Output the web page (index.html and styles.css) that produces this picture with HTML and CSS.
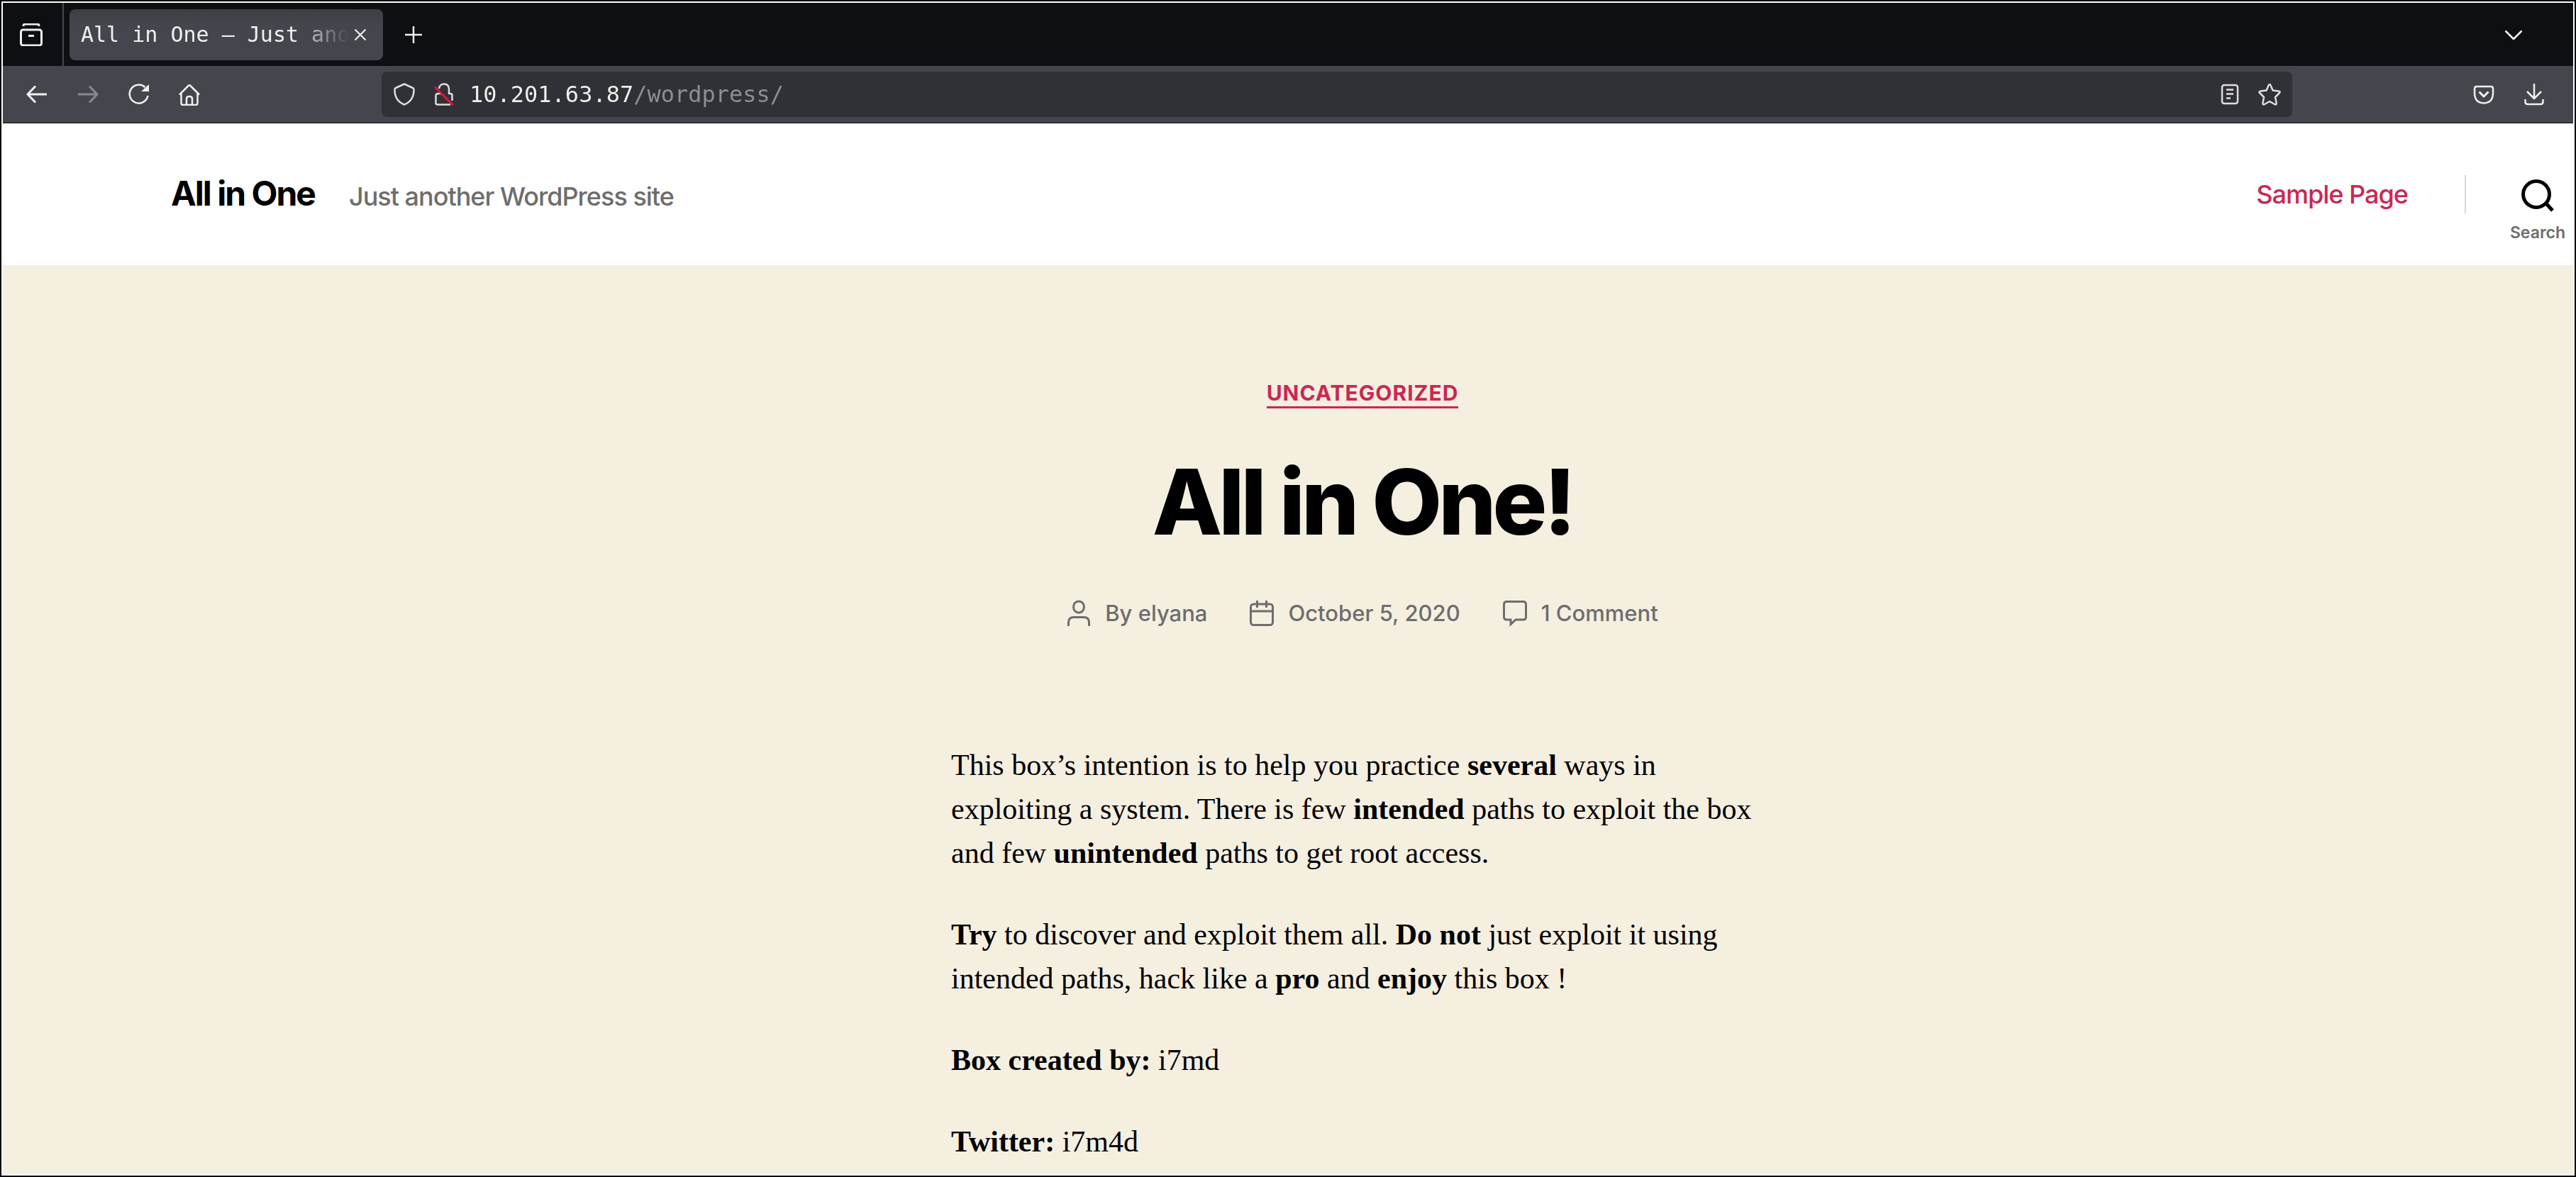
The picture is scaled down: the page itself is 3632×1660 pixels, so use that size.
FILE: index.html
```html
<!DOCTYPE html>
<html lang="en">
<head>
<meta charset="utf-8">
<title>All in One – Just another WordPress site</title>
<link rel="stylesheet" href="styles.css">
</head>
<body>
<div class="window">
  <div class="tabstrip">
    <button class="icon-button archive" aria-label="View recent browsing">
      <svg class="icon" viewBox="0 0 32 32"><path d="M5 4V3.500Q5 1 7.500 1H24.500Q27 1 27 3.500V4" stroke-width="3"/><rect x="1.500" y="9" width="29" height="22" rx="3" stroke-width="3"/><path d="M12 17.500h8" stroke-width="3"/></svg>
    </button>
    <div class="tab">
      <span class="tab-title">All in One – Just another WordPress site</span>
      <button class="tab-close" aria-label="Close tab">
        <svg class="icon" viewBox="0 0 32 32"><path d="M8.500 8.500l15 15M23.500 8.500l-15 15" stroke-width="2"/></svg>
      </button>
    </div>
    <button class="icon-button new-tab" aria-label="New tab">
      <svg class="icon" viewBox="0 0 32 32"><path d="M16 4v24M4 16h24" stroke-width="2.500"/></svg>
    </button>
    <button class="icon-button tab-list" aria-label="List all tabs">
      <svg class="icon" viewBox="0 0 32 32"><path d="M4.500 10.500L16 22 27.500 10.500" stroke-width="2.500"/></svg>
    </button>
  </div>

  <div class="toolbar">
    <div class="nav-buttons">
      <button class="icon-button" aria-label="Back"><svg class="icon" viewBox="0 0 32 32"><path d="M30 16H3M14 4.500L3 16l11 11.500" stroke-width="3"/></svg></button>
      <button class="icon-button" aria-label="Forward" disabled><svg class="icon" viewBox="0 0 32 32"><path d="M2 16h27M18 4.500L29 16 18 27.500" stroke-width="3"/></svg></button>
      <button class="icon-button" aria-label="Reload"><svg class="icon" viewBox="0 0 32 32"><path d="M24.500 6A13 13 0 1 0 28.500 18" stroke-width="2.500"/><path class="solid" d="M30 2v10H19z"/></svg></button>
      <button class="icon-button" aria-label="Home"><svg class="icon" viewBox="0 0 32 32"><path d="M1 16.500L13.500 4Q15 2.500 16.500 4L29 16.500M3.500 15V28.500Q3.500 31 6 31H24Q26.500 31 26.500 28.500V15M11 31V22Q11 19 15 19T19 22V31" stroke-width="2.500"/></svg></button>
    </div>
    <div class="urlbar">
      <button class="url-button" aria-label="Tracking protection"><svg class="icon" viewBox="0 0 32 32"><path d="M16 1.500L28 7Q29.500 7.500 29.500 10Q29.500 25 16 30.500Q2.500 25 2.500 10Q2.500 7.500 4 7Z" stroke-width="2.500"/></svg></button>
      <button class="url-button" aria-label="Connection is not secure"><svg class="icon" viewBox="0 0 32 32"><path d="M9 8Q10 1.500 16 1.500Q23 1.500 23 9V15H25Q27.500 15 27.500 17.500V25M13 15H8Q4.500 15 4.500 18V28Q4.500 30.500 7 30.500H25" stroke-width="2.500"/><path class="alert" d="M3 5.500L28.500 31" stroke-width="3"/></svg></button>
      <input class="url" type="text" aria-label="Address" value="10.201.63.87/wordpress/" spellcheck="false">
      <button class="url-button" aria-label="Reader view"><svg class="icon" viewBox="0 0 32 32"><rect x="5" y="3" width="22" height="26" rx="3" stroke-width="2.500"/><path d="M11 9.500h10M11 15.500h10M11 21.500h6" stroke-width="2.500"/></svg></button>
      <button class="url-button" aria-label="Bookmark this page"><svg class="icon" viewBox="0 0 32 32"><path d="M14.500 3.500Q16 .5 17.500 3.500L20.500 10.500 28.500 11.500Q32 12 29.500 14.500L24 20 25.500 28Q26 31.500 23 30L16 26 9 30Q6 31.500 6.500 28L8 20 2.500 14.500Q0 12 3.500 11.500L11.500 10.500Z" stroke-width="2.500"/></svg></button>
    </div>
    <div class="side-buttons">
      <button class="icon-button" aria-label="Save to Pocket"><svg class="icon" viewBox="0 0 32 32"><path d="M6 5H26Q29 5 29 8V15Q28.500 28 16 28.500Q3.500 28 3 15V8Q3 5 6 5Z" stroke-width="2.500"/><path d="M9.500 12.500l6.500 6.500 6.500-6.500" stroke-width="3"/></svg></button>
      <button class="icon-button" aria-label="Downloads"><svg class="icon" viewBox="0 0 32 32"><path d="M15 1V21M5 12l10 10 10-10M2.500 23V26.500Q2.500 30 6 30H24Q27.500 30 27.500 26.500V23" stroke-width="2.500"/></svg></button>
    </div>
  </div>

  <div class="page">
    <header class="site-header">
      <div class="branding">
        <a class="site-title" href="#">All in One</a>
        <span class="site-description">Just another WordPress site</span>
      </div>
      <nav class="site-nav">
        <a class="nav-link" href="#">Sample Page</a>
        <div class="search-wrap">
          <button class="search-toggle">
            <svg class="search-icon" viewBox="0 0 46 46"><circle cx="21" cy="21" r="18.500" stroke-width="5"/><path d="M34 33l10 11" stroke-width="5"/></svg>
            Search
          </button>
        </div>
      </nav>
    </header>
    <main class="post">
      <a class="category" href="#">Uncategorized</a>
      <h1 class="post-title">All in One!</h1>
      <ul class="post-meta">
        <li class="meta-item">
          <svg class="meta-icon" viewBox="0 0 34 38"><ellipse cx="17" cy="10" rx="7.500" ry="8"/><path d="M2.500 37V32Q2.500 24.500 10 24.500H24Q31.500 24.500 31.500 32V37"/></svg>
          <a class="meta-link" href="#">By elyana</a>
        </li>
        <li class="meta-item">
          <svg class="meta-icon" viewBox="0 0 34 38"><rect x="1.500" y="6" width="31" height="29.500" rx="4"/><path d="M10.500 1v10M23.500 1v10M2 16h30"/></svg>
          <a class="meta-link" href="#">October 5, 2020</a>
        </li>
        <li class="meta-item">
          <svg class="meta-icon" viewBox="0 0 34 38"><path d="M5.500 2.500H28.500Q32.500 2.500 32.500 6.500V24Q32.500 28 28.500 28H18L11 34.500V28H5.500Q1.500 28 1.500 24V6.500Q1.500 2.500 5.500 2.500Z"/></svg>
          <a class="meta-link" href="#">1 Comment</a>
        </li>
      </ul>
      <div class="post-content">
        <p>This box’s intention is to help you practice <strong>several</strong> ways in exploiting a system. There is few <strong>intended</strong> paths to exploit the box and few <strong>unintended</strong> paths to get root access.</p>
        <p><strong>Try</strong> to discover and exploit them all. <strong>Do not</strong> just exploit it using intended paths, hack like a <strong>pro</strong> and <strong>enjoy</strong> this box !</p>
        <p><strong>Box created by:</strong> i7md</p>
        <p><strong>Twitter:</strong> i7m4d</p>
      </div>
    </main>
  </div>
</div>
</body>
</html>
```
FILE: styles.css
```css
:root {
  --strip: #0e0f13;
  --bar: #44464e;
  --field: #303136;
  --chrome-text: #f0f0ec;
  --accent: #cd2653;
  --muted: #6d6d6d;
  --cream: #f5efe0;
}

* {
  box-sizing: border-box;
}

body {
  margin: 0;
  background: #000;
}

button {
  padding: 0;
  border: 0;
  background: none;
  color: inherit;
  font: inherit;
}

a {
  color: inherit;
  text-decoration: none;
}

.window {
  display: flex;
  flex-direction: column;
  min-height: 100vh;
  border: 2px solid #000;
  outline: 2px solid #fff;
  outline-offset: -4px;
  padding: 2px;
}

/* Browser chrome */

.icon {
  display: block;
  width: 32px;
  height: 32px;
  fill: none;
  stroke: currentColor;
  stroke-linejoin: round;
}

.icon .solid {
  fill: currentColor;
  stroke: none;
}

.icon .alert {
  stroke: #f0103c;
}

.icon-button {
  display: flex;
  align-items: center;
  justify-content: center;
  width: 72px;
  height: 64px;
}

.icon-button:disabled {
  opacity: 0.4;
}

.tabstrip {
  display: flex;
  align-items: center;
  height: 89px;
  background: var(--strip);
  color: var(--chrome-text);
  font: 30px "DejaVu Sans Mono", monospace;
}

.archive {
  width: 86px;
  height: 100%;
  padding-right: 4px;
  border-right: 2px solid #44464e;
}

.tab {
  display: flex;
  align-items: center;
  width: 442px;
  height: 72px;
  margin-left: 8px;
  padding: 0 16px;
  border-radius: 8px;
  background: linear-gradient(#3e3f44, var(--bar) 24px);
}

.tab-title {
  flex: 1;
  overflow: hidden;
  white-space: nowrap;
  -webkit-mask-image: linear-gradient(to left, transparent, #000 80px);
  mask-image: linear-gradient(to left, transparent, #000 80px);
}

.new-tab {
  margin-left: 7px;
}

.tab-list {
  margin: 0 48px 0 auto;
}

.toolbar {
  display: flex;
  align-items: center;
  height: 81px;
  padding: 0 18px 0 12px;
  border-bottom: 1px solid #0e0f13;
  background: var(--bar);
  color: var(--chrome-text);
}

.nav-buttons,
.side-buttons {
  display: flex;
}

.urlbar {
  display: flex;
  align-items: center;
  flex: 1;
  height: 64px;
  margin: 0 234px;
  padding: 0 4px;
  border-radius: 8px;
  background: var(--field);
  color: #dededb;
}

.url-button {
  display: flex;
  align-items: center;
  justify-content: center;
  width: 56px;
  height: 56px;
}

/* The host part (12 characters) is bright, the path is dimmed. */
.url {
  flex: 1;
  min-width: 0;
  padding: 0;
  margin-left: 8px;
  border: 0;
  outline: 0;
  font: 32px "DejaVu Sans Mono", monospace;
  color: transparent;
  background: linear-gradient(to right, #f0f0ec 12ch, #8e8f91 12ch);
  -webkit-background-clip: text;
  background-clip: text;
}

/* Web page */

.page {
  display: flex;
  flex-direction: column;
  flex: 1;
  background: var(--cream);
  font-family: Inter, sans-serif;
}

.site-header {
  display: flex;
  justify-content: space-between;
  height: 200px;
  padding: 0 11px 0 237px;
  background: #fff;
}

.branding {
  display: flex;
  align-items: baseline;
  gap: 48px;
  padding-top: 69px;
}

.site-title {
  font-size: 48px;
  font-weight: 700;
  line-height: 60px;
  letter-spacing: -2px;
}

.site-description {
  color: var(--muted);
  font-size: 36px;
  font-weight: 500;
  letter-spacing: -1px;
}

.site-nav {
  display: flex;
  align-items: center;
  gap: 80px;
}

.nav-link {
  color: var(--accent);
  font-size: 36px;
  font-weight: 500;
  letter-spacing: -1px;
}

.search-wrap {
  height: 54px;
  padding-left: 62px;
  border-left: 2px solid #dcd7ca;
}

.search-toggle {
  display: flex;
  flex-direction: column;
  align-items: center;
  gap: 15px;
  padding-top: 6px;
  color: var(--muted);
  font-size: 23px;
  font-weight: 600;
  line-height: 28px;
}

.search-icon {
  width: 46px;
  height: 46px;
  fill: none;
  stroke: #000;
}

.post {
  display: flex;
  flex-direction: column;
  align-items: center;
  padding: 162px 0 0 210px;
}

.category {
  padding-bottom: 1px;
  border-bottom: 3px solid var(--accent);
  color: var(--accent);
  font-size: 30px;
  font-weight: 700;
  line-height: 36px;
  letter-spacing: 1px;
  text-transform: uppercase;
}

.post-title {
  margin: 62px 0 63px;
  font-size: 128px;
  font-weight: 800;
  line-height: 140px;
  letter-spacing: -5px;
}

.post-meta {
  display: flex;
  gap: 60px;
  margin: 0 0 159px;
  padding: 0;
  list-style: none;
  color: var(--muted);
  font-size: 31px;
  font-weight: 500;
  line-height: 48px;
}

.meta-item {
  display: flex;
  align-items: center;
  gap: 20px;
}

.meta-icon {
  width: 34px;
  height: 38px;
  fill: none;
  stroke: currentColor;
  stroke-width: 3;
}

.post-content {
  width: 100%;
  max-width: 1160px;
  font-family: "Liberation Serif", serif;
  font-size: 42px;
  line-height: 62px;
}

.post-content p {
  margin: 0 0 53px;
}

.post-content p:last-child {
  margin-bottom: 0;
}
```
